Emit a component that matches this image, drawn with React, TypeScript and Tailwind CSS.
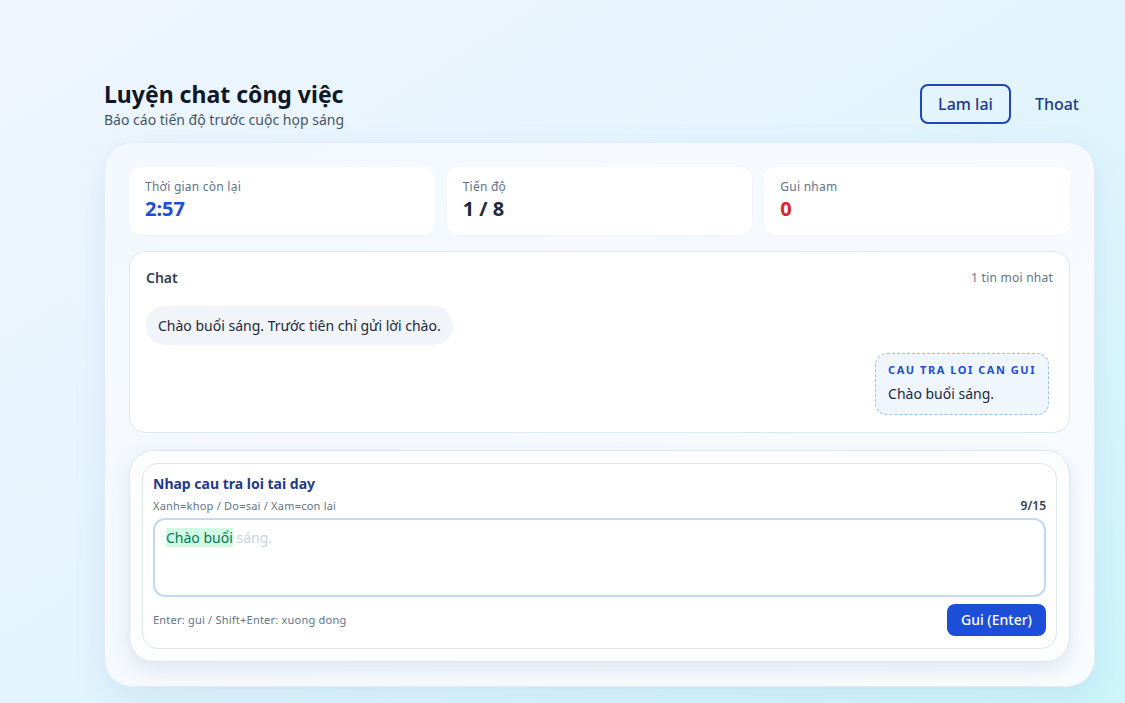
export default function App() {
  return (
    <div
      className="min-h-screen bg-linear-to-br from-[#f0f6fe] via-[#e3f4fd] to-[#cdf5fa] pl-[104px] pr-[30px] pt-[78px] pb-4 text-slate-900"
      style={{ fontFamily: '"Noto Sans", sans-serif' }}
    >
      <header className="flex items-center justify-between mb-3">
        <div>
          <h1 className="text-[23px] leading-8 font-bold text-[#0f172a]">Luyện chat công việc</h1>
          <p className="text-sm leading-5 text-slate-600">Báo cáo tiến độ trước cuộc họp sáng</p>
        </div>
        <div className="flex items-center gap-6 mr-4">
          <button className="h-10 px-4 rounded-lg border-2 border-[#1e47b4] text-[#1e3a8a] text-base font-medium bg-transparent">
            Lam lai
          </button>
          <button className="text-base font-medium text-[#1e3a8a]">Thoat</button>
        </div>
      </header>

      <main className="rounded-[28px] border border-[#e2ecf8] bg-linear-to-br from-[#f3f8ff] to-[#f9fcff] p-6 shadow-[0_10px_30px_rgba(100,150,200,0.15)]">
        <div className="grid grid-cols-3 gap-3">
          <Stat label="Thời gian còn lại" value="2:57" color="text-[#1d4ed8]" />
          <Stat label="Tiến độ" value="1 / 8" color="text-slate-800" />
          <Stat label="Gui nham" value="0" color="text-[#dc2626]" />
        </div>

        <section className="mt-4 rounded-2xl border border-[#dfe7f1] bg-white px-4 pt-4 pb-[17px]">
          <div className="flex items-center justify-between">
            <span className="text-sm leading-5 font-semibold text-slate-700">Chat</span>
            <span className="text-xs tracking-[0.02em] text-slate-500">1 tin moi nhat</span>
          </div>
          <div className="mt-[18px] flex">
            <div className="rounded-[20px] bg-[#f1f4f8] px-3 py-2 text-sm leading-[23px] text-slate-800">
              Chào buổi sáng. Trước tiên chỉ gửi lời chào.
            </div>
          </div>
          <div className="mt-2 flex justify-end pr-1">
            <div className="rounded-xl border border-dashed border-[#9ec0ee] bg-[#eff6ff] px-3 py-2 whitespace-nowrap">
              <div className="text-[11px] leading-4 font-bold tracking-[0.14em] text-[#1d4ed8]">CAU TRA LOI CAN GUI</div>
              <div className="mt-1 text-sm leading-6 text-slate-800">Chào buổi sáng.</div>
            </div>
          </div>
        </section>

        <section className="mt-[17px] rounded-3xl border border-[#dbe7f7] bg-[#fbfdff] p-3 shadow-[0_8px_20px_rgba(120,140,170,0.18)]">
          <div className="rounded-2xl border border-[#e1e7ef] bg-white px-[10px] pt-2.5 pb-3">
            <div className="text-sm leading-5 font-bold text-[#1e3a8a]">Nhap cau tra loi tai day</div>
            <div className="mt-1 flex items-center justify-between">
              <span className="text-[11px] leading-4 tracking-[0.02em] text-slate-500">Xanh=khop / Do=sai / Xam=con lai</span>
              <span className="text-xs leading-4 font-semibold text-slate-700">9/15</span>
            </div>
            <div className="mt-1 h-[79px] rounded-xl border-2 border-[#c3d8f5] px-[11px] pt-1.5 text-sm leading-6">
              <span className="bg-[#d1fae5] text-[#047857]">Chào buổi</span>
              <span className="text-slate-300"> sáng.</span>
            </div>
            <div className="mt-[7px] flex items-center justify-between">
              <span className="text-[11px] tracking-[0.02em] text-slate-500">Enter: gui / Shift+Enter: xuong dong</span>
              <button className="h-8 rounded-lg bg-[#1d4ed8] px-[14px] text-sm font-medium text-white">Gui (Enter)</button>
            </div>
          </div>
        </section>
      </main>
    </div>
  )
}

function Stat({ label, value, color }: { label: string; value: string; color: string }) {
  return (
    <div className="rounded-xl bg-white px-4 py-3 shadow-[0_1px_2px_rgba(15,23,42,0.03)]">
      <div className="text-xs leading-4 tracking-[0.02em] text-slate-500">{label}</div>
      <div className={`text-xl leading-7 font-bold ${color}`}>{value}</div>
    </div>
  )
}
